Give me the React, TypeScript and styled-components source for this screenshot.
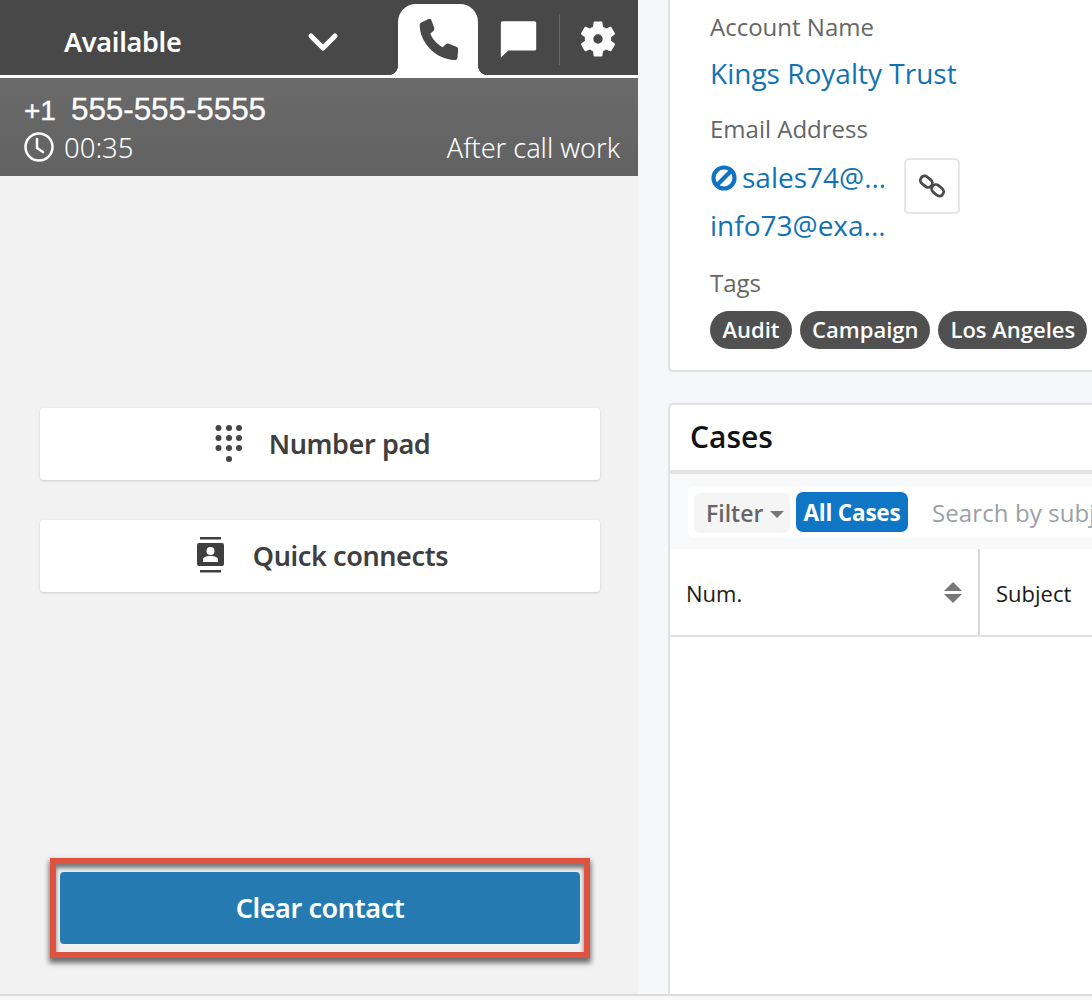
import React from "react";
import styled, { createGlobalStyle } from "styled-components";

const Global = createGlobalStyle`
  html, body { margin: 0; padding: 0; background: #f5f7f9; }
  #root { width: 1092px; height: 1000px; overflow: hidden; }
  * { box-sizing: border-box; }
`;
const Page = styled.div`
  width: 1092px; height: 1000px; display: flex; overflow: hidden;
  background: #f5f7f9; position: relative;
`;
const Softphone = styled.div`
  width: 638px; height: 994px; flex: none; background: #f2f2f2;
  display: flex; flex-direction: column; font-family: "Noto Sans", sans-serif;
`;
const TopBar = styled.div`
  height: 75px; background: #484848; display: flex; align-items: flex-start; flex: none;
`;
const StatusSelect = styled.div`
  width: 398px; height: 75px; flex: none; display: flex; align-items: center;
  justify-content: space-between; padding: 8px 59px 0 64px; color: #fff;
`;
const StatusText = styled.span`
  display: inline-block; font-size: 27px; font-weight: 600; line-height: 1; letter-spacing: -0.3px;
`;
const PhoneTab = styled.div`
  width: 80px; height: 71px; margin-top: 4px; flex: none; background: #fff;
  border-radius: 18px 18px 0 0; display: flex; align-items: center; justify-content: center;
  position: relative;
  &::before, &::after { content: ""; position: absolute; bottom: 0; width: 10px; height: 10px; }
  &::before { left: -10px; background: radial-gradient(circle at 0 0, transparent 10px, #fff 10.5px); }
  &::after { right: -10px; background: radial-gradient(circle at 100% 0, transparent 10px, #fff 10.5px); }
`;
const IconSlot = styled.div<{ $width: number }>`
  height: 75px; width: ${(p) => p.$width}px; flex: none; display: flex;
  align-items: center; justify-content: center; padding-top: 4px; padding-bottom: 2px;
`;
const Divider = styled.div`
  width: 1px; height: 51px; margin: 14px 0 0 1px; background: #666; flex: none;
`;
const WhiteRule = styled.div` height: 3px; background: #fff; flex: none; `;
const CallInfo = styled.div`
  height: 98px; flex: none; color: #fff; padding: 13px 18px 0 24px;
  background: linear-gradient(#6a6a6a, #626262);
`;
const PhoneNumber = styled.div`
  display: flex; align-items: baseline; font-family: "Liberation Sans", sans-serif;
  font-size: 31.5px; line-height: 36px; letter-spacing: -0.1px; -webkit-text-stroke: .3px #fff;
`;
const Prefix = styled.span` font-size: 28px; width: 47px; flex: none; `;
const CallMeta = styled.div`
  display: flex; align-items: center; justify-content: space-between;
  font-weight: 300; height: 36px;
`;
const Timer = styled.span` display: flex; align-items: center; gap: 8px; font-size: 27.5px; `;
const AfterCall = styled.span` font-size: 27px; `;
const Actions = styled.div`
  flex: 1; display: flex; flex-direction: column; padding: 232px 38px 0 40px; gap: 40px;
`;
const ActionButton = styled.div<{ $gap: number }>`
  height: 72px; background: #fff; border-radius: 4px; box-shadow: 0 1px 3px rgba(0,0,0,.16);
  display: flex; align-items: center; justify-content: center; gap: ${(p) => p.$gap}px;
  color: #3f3f3f; font-size: 27px; font-weight: 600; padding: 0 0 2px 5px;
`;
const ActionText = styled.span` display: inline-block; letter-spacing: -0.4px; `;
const Footer = styled.div`
  flex: none; padding: 0 48px 36px 50px;
`;
const Highlight = styled.div`
  border: 6px solid #dd5340; padding: 8px 4px; height: 100px; width: 540px;
  box-shadow: 0 4px 5px 1px rgba(0,0,0,.55), inset 0 4px 4px rgba(0,0,0,.5);
  background: #f0f0f0;
`;
const ClearButton = styled.div`
  height: 72px; background: #257bb1; border-radius: 4px; color: #fff; font-size: 27px; font-weight: 600;
  display: flex; align-items: center; justify-content: center; letter-spacing: -0.4px; padding-bottom: 2px;
`;
const Content = styled.div`
  flex: 1; min-width: 0; padding-left: 30px; height: 994px; display: flex; flex-direction: column; gap: 31px;
`;
const Card = styled.div`
  background: #fff; border: 2px solid #dfe1e4; border-right: 0;
  font-family: "Open Sans", sans-serif; width: 500px;
`;
const AccountCard = styled(Card)`
  height: 373px; margin-top: -1px; border-top: 0; padding: 11px 0 0 40px; border-radius: 0 0 0 5px; flex: none;
`;
const Label = styled.div<{ $top?: number }>`
  font-size: 24px; line-height: 34px; color: #666; height: 34px; margin-top: ${(p) => p.$top ?? 0}px;
`;
const LinkText = styled.div`
  font-size: 28px; line-height: 40px; color: #1173b5;
`;
const AccountLink = styled(LinkText)` margin-top: 9px; `;
const EmailRow = styled.div` display: flex; margin-top: 11px; height: 88px; `;
const Emails = styled.div` width: 194px; flex: none; display: flex; flex-direction: column; gap: 8px; `;
const Email = styled(LinkText)` display: flex; align-items: center; gap: 4px; `;
const CopyButton = styled.div`
  width: 56px; height: 56px; margin-top: 1px; border: 2px solid #e6e6e6; border-radius: 5px; background: #fff;
  display: flex; align-items: center; justify-content: center;
`;
const TagRow = styled.div` display: flex; gap: 8px; margin-top: 11px; `;
const Tag = styled.div`
  height: 38px; border-radius: 19px; background: #505050; color: #fff; font-size: 22px; font-weight: 600;
  line-height: 37px; padding: 0 12px; white-space: nowrap; min-width: 82px; text-align: center;
`;
const CasesCard = styled(Card)`
  flex: 1; border-bottom: 0; border-radius: 5px 0 0 0; display: flex; flex-direction: column;
`;
const CasesHeader = styled.div`
  height: 69px; flex: none; padding: 13px 0 0 20px; font-size: 30px; line-height: 38px; font-weight: 600; color: #111;
  border-bottom: 4px solid #e3e3e3;
`;
const Toolbar = styled.div`
  height: 75px; flex: none; background: #f8f9fa; padding: 12px 0 0 18px;
`;
const ToolbarInner = styled.div`
  height: 52px; background: #fff; border-radius: 6px; display: flex; align-items: center; padding-left: 6px;
  width: 420px; white-space: nowrap; overflow: hidden;
`;
const FilterButton = styled.div`
  width: 96px; height: 40px; border-radius: 6px; background: #f5f5f5; color: #666; font-size: 23px; font-weight: 600;
  display: flex; align-items: center; padding-left: 12px; gap: 7px; flex: none; margin-top: 1px;
`;
const Caret = styled.span`
  width: 0; height: 0; border: 7px solid transparent; border-top: 7px solid #777; border-bottom: 0; display: block; margin-top: 3px;
`;
const AllCases = styled.div`
  width: 112px; height: 40px; margin-left: 6px; border-radius: 7px; background: #0f76c6; color: #fff; font-size: 22.5px;
  font-weight: 700; display: flex; align-items: center; justify-content: center; flex: none; letter-spacing: -.2px;
`;
const SearchText = styled.div`
  margin-left: 24px; color: #9aa0a6; font-size: 24px; letter-spacing: .1px; margin-top: 1px;
`;
const TableHead = styled.div`
  height: 88px; flex: none; display: flex; border-bottom: 2px solid #e0e0e0; background: #fff;
`;
const HeadCell = styled.div`
  height: 86px; display: flex; align-items: center; justify-content: space-between;
  font-size: 22px; color: #1a1a1a; padding-top: 1px;
`;
const NumCell = styled(HeadCell)` width: 310px; flex: none; padding-left: 16px; padding-right: 16px; border-right: 2px solid #d8d8d8; `;
const SubjectCell = styled(HeadCell)` padding-left: 16px; `;
const SortIcon = styled.div` display: flex; flex-direction: column; gap: 3px; `;
const SortUp = styled.span`
  display: block; width: 0; height: 0; border: 9px solid transparent; border-top: 0; border-bottom: 9px solid #777;
`;
const SortDown = styled.span`
  display: block; width: 0; height: 0; border: 9px solid transparent; border-bottom: 0; border-top: 9px solid #777;
`;
const BottomLine = styled.div`
  position: absolute; left: 0; right: 0; bottom: 0; height: 6px; background: #f7f7f7; border-top: 2px solid #dcdcdc;
`;
const KeypadWrap = styled.span` display: flex; margin-top: 2px; `;

const PhoneIcon = () => (
  <svg width="49" height="49" viewBox="0 0 24 24" fill="#484848">
    <path d="M6.6 2.2c.9-.4 1.700-.3 2 .5l1.300 3.600c.2.6 0 1.100-.4 1.500L8 9.100c.9 2.700 3.300 5.300 6 6.700l1.500-1.400c.4-.4 1-.5 1.500-.3l3.800 1.500c.6.2.9.8.8 1.500l-.3 3.800c-.2.8-.6 1.200-1.400 1.100C10.600 21.900 2.800 13.300 2.800 4.900c0-.5.3-.9.8-1.200z" />
  </svg>
);
const ChatIcon = () => (
  <svg width="42" height="42" viewBox="0 0 24 24" fill="#fff">
    <path d="M3.300 1.800h18c.7 0 1.100.4 1.100 1.100v14.600c0 .7-.4 1.100-1.100 1.100H6.500L2.200 22.500V2.900c0-.7.4-1.100 1.100-1.100z" />
  </svg>
);
const GearIcon = () => (
  <svg width="42" height="42" viewBox="0 0 24 24" fill="#fff">
    <path fillRule="evenodd" d="M19.430 12.980c.04-.32.07-.64.07-.98s-.03-.66-.07-.98l2.110-1.650c.19-.15.24-.42.12-.64l-2-3.460c-.12-.22-.39-.3-.61-.22l-2.490 1c-.52-.4-1.080-.73-1.690-.98l-.38-2.650A.49.49 0 0 0 14 2h-4c-.25 0-.46.18-.49.42l-.38 2.650c-.61.25-1.170.59-1.690.98l-2.490-1c-.23-.09-.49 0-.61.22l-2 3.460c-.13.22-.07.49.12.64l2.110 1.650c-.04.32-.07.65-.07.98s.03.66.07.98l-2.110 1.650c-.19.15-.24.42-.12.64l2 3.460c.12.22.39.3.61.22l2.490-1c.52.4 1.080.73 1.690.98l.38 2.650c.03.24.24.42.49.42h4c.25 0 .46-.18.49-.42l.38-2.650c.61-.25 1.170-.59 1.690-.98l2.490 1c.23.09.49 0 .61-.22l2-3.460c.12-.22.07-.49-.12-.64l-2.110-1.650zM12 14.700a2.700 2.700 0 1 1 0-5.400 2.700 2.700 0 0 1 0 5.400z" />
  </svg>
);
const Chevron = () => (
  <svg width="32" height="22" viewBox="0 0 32 22" fill="none" stroke="#fff" strokeWidth="5" strokeLinecap="round" strokeLinejoin="round">
    <path d="M4 5l12 12L28 5" />
  </svg>
);
const ClockIcon = () => (
  <svg width="32" height="32" viewBox="0 0 32 32" fill="none" stroke="#fff" strokeWidth="2.500" strokeLinecap="round">
    <circle cx="15" cy="16" r="13.500" />
    <path d="M13 8v9l6 4" />
  </svg>
);
const KeypadIcon = () => (
  <svg width="30" height="38" viewBox="0 0 30 38" fill="#444">
    {[3, 13, 23].flatMap((y) => [3.5, 14, 24].map((x) => <circle key={x + "-" + y} cx={x} cy={y} r="3" />))}
    <circle cx="14" cy="34" r="3" />
  </svg>
);
const ContactsIcon = () => (
  <svg width="30" height="38" viewBox="1 0 30 38" fill="#3f3f3f">
    <rect x="4" y="1" width="21" height="2.500" />
    <rect x="4" y="34" width="21" height="2.500" />
    <path fillRule="evenodd" d="M3 7h23a2 2 0 0 1 2 2v19a2 2 0 0 1-2 2H3a2 2 0 0 1-2-2V9a2 2 0 0 1 2-2zm11.500 4a4 4 0 1 0 0 8 4 4 0 0 0 0-8zM7 26h15v-2.500c0-2-3-3.500-7.500-3.500S7 21.500 7 23.500z" />
  </svg>
);
const BlockedIcon = () => (
  <svg width="28" height="28" viewBox="0 0 28 28" fill="none" stroke="#1173c4" strokeWidth="4.200">
    <circle cx="14" cy="15" r="10.500" />
    <path d="M7 22L21 8" />
  </svg>
);
const LinkIcon = () => (
  <svg width="30" height="30" viewBox="0 0 30 30" fill="none" stroke="#4a4a4a" strokeWidth="2.800">
    <rect x="3" y="6.500" width="13" height="8.500" rx="4.200" transform="rotate(40 9.500 10.500)" />
    <rect x="14" y="15" width="13" height="8.500" rx="4.200" transform="rotate(40 20.500 19.500)" />
  </svg>
);

export default function App() {
  return (
    <Page>
      <Global />
      <Softphone>
        <TopBar>
          <StatusSelect>
            <StatusText>Available</StatusText>
            <Chevron />
          </StatusSelect>
          <PhoneTab><PhoneIcon /></PhoneTab>
          <IconSlot $width={80}><ChatIcon /></IconSlot>
          <Divider />
          <IconSlot $width={76}><GearIcon /></IconSlot>
        </TopBar>
        <WhiteRule />
        <CallInfo>
          <PhoneNumber><Prefix>+1</Prefix><span>555-555-5555</span></PhoneNumber>
          <CallMeta>
            <Timer><ClockIcon />00:35</Timer>
            <AfterCall>After call work</AfterCall>
          </CallMeta>
        </CallInfo>
        <Actions>
          <ActionButton $gap={24}><KeypadWrap><KeypadIcon /></KeypadWrap><ActionText>Number pad</ActionText></ActionButton>
          <ActionButton $gap={26}><ContactsIcon /><ActionText>Quick connects</ActionText></ActionButton>
        </Actions>
        <Footer>
          <Highlight><ClearButton>Clear contact</ClearButton></Highlight>
        </Footer>
      </Softphone>
      <Content>
        <AccountCard>
          <Label>Account Name</Label>
          <AccountLink>Kings Royalty Trust</AccountLink>
          <Label $top={19}>Email Address</Label>
          <EmailRow>
            <Emails>
              <Email><BlockedIcon />sales74@...</Email>
              <LinkText>info73@exa...</LinkText>
            </Emails>
            <CopyButton><LinkIcon /></CopyButton>
          </EmailRow>
          <Label $top={21}>Tags</Label>
          <TagRow>
            <Tag>Audit</Tag>
            <Tag>Campaign</Tag>
            <Tag>Los Angeles</Tag>
          </TagRow>
        </AccountCard>
        <CasesCard>
          <CasesHeader>Cases</CasesHeader>
          <Toolbar>
            <ToolbarInner>
              <FilterButton>Filter<Caret /></FilterButton>
              <AllCases>All Cases</AllCases>
              <SearchText>Search by subject</SearchText>
            </ToolbarInner>
          </Toolbar>
          <TableHead>
            <NumCell>Num.<SortIcon><SortUp /><SortDown /></SortIcon></NumCell>
            <SubjectCell>Subject</SubjectCell>
          </TableHead>
        </CasesCard>
      </Content>
      <BottomLine />
    </Page>
  );
}
